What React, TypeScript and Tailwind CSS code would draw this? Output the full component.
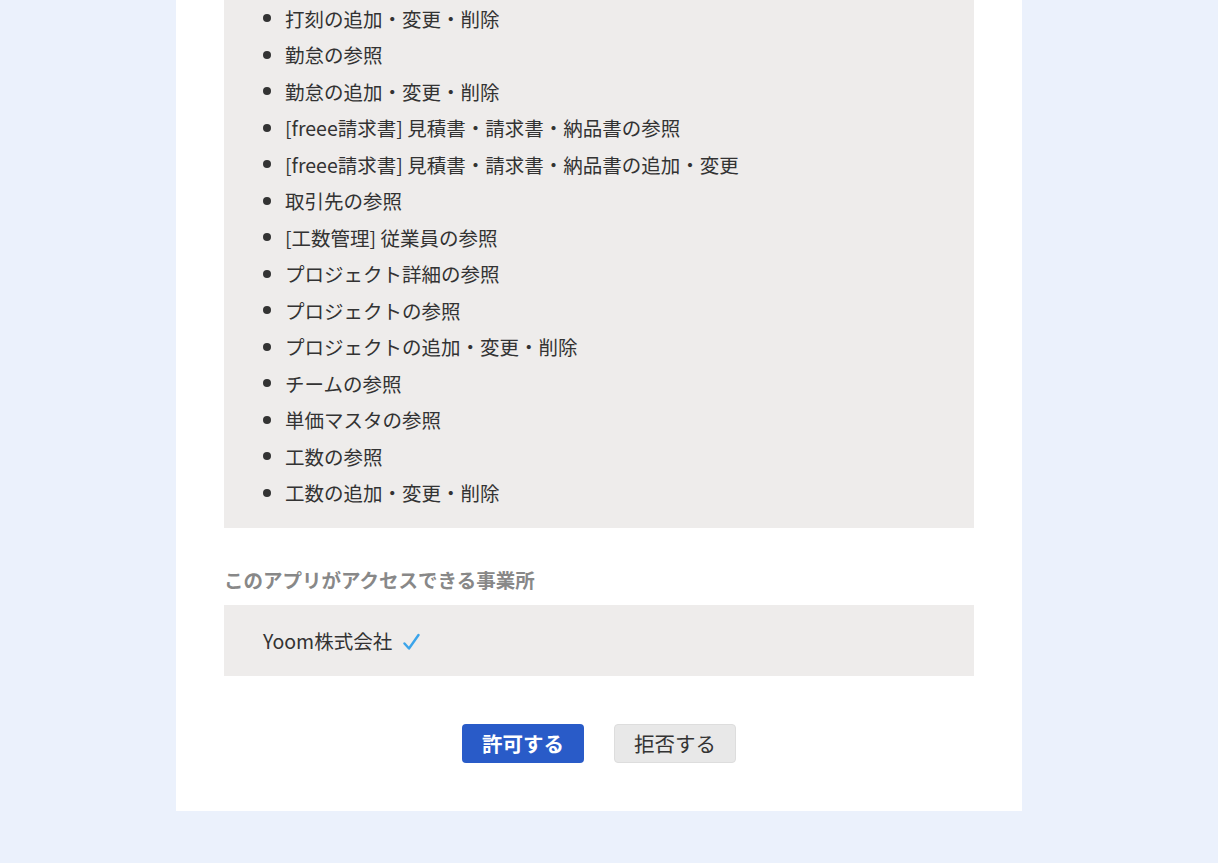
const scopes = [
  '打刻の追加・変更・削除',
  '勤怠の参照',
  '勤怠の追加・変更・削除',
  '[freee請求書] 見積書・請求書・納品書の参照',
  '[freee請求書] 見積書・請求書・納品書の追加・変更',
  '取引先の参照',
  '[工数管理] 従業員の参照',
  'プロジェクト詳細の参照',
  'プロジェクトの参照',
  'プロジェクトの追加・変更・削除',
  'チームの参照',
  '単価マスタの参照',
  '工数の参照',
  '工数の追加・変更・削除',
];

const App = () => {
  return (
    <div
      className="min-h-[863px] bg-[#ebf1fc] pr-5 text-[#333]"
      style={{ fontFamily: '"Noto Sans CJK JP", "Noto Sans", sans-serif' }}
    >
      <div className="mx-auto w-[846px] bg-white px-12 pb-12">
        <ul className="bg-[#eeeceb] pb-[17px] pl-[39px] pr-6">
          {scopes.map((s) => (
            <li key={s} className="flex h-[36.5px] items-center text-[19.5px]">
              <span className="mr-[14px] h-[8px] w-[8px] shrink-0 rounded-full bg-[#333]" />
              <span>{s}</span>
            </li>
          ))}
        </ul>

        <h2 className="mt-[38px] text-[19.5px] font-bold leading-[28px] text-[#888]">
          このアプリがアクセスできる事業所
        </h2>
        <div className="mt-[11px] flex h-[71px] items-center bg-[#eeeceb] px-[39px] text-[19.5px]">
          <span>Yoom株式会社</span>
          <svg className="ml-[11px] mt-[2px]" width="17" height="18" viewBox="0 0 17 18" fill="none">
            <path
              d="M1.5 10.5 L6 15.5 L15.5 2"
              stroke="#3ba4ea"
              strokeWidth="2.4"
              strokeLinecap="round"
              strokeLinejoin="round"
            />
          </svg>
        </div>

        <div className="mt-[48px] flex justify-center gap-[30px]">
          <button className="h-[39px] w-[122px] rounded-[4px] bg-[#295bc8] text-[20.5px] font-bold text-white">
            許可する
          </button>
          <button className="h-[39px] w-[122px] rounded-[4px] border border-[#dddddd] bg-[#e8e8e8] text-[20.5px] text-[#333]">
            拒否する
          </button>
        </div>
      </div>
    </div>
  );
};

export default App;
